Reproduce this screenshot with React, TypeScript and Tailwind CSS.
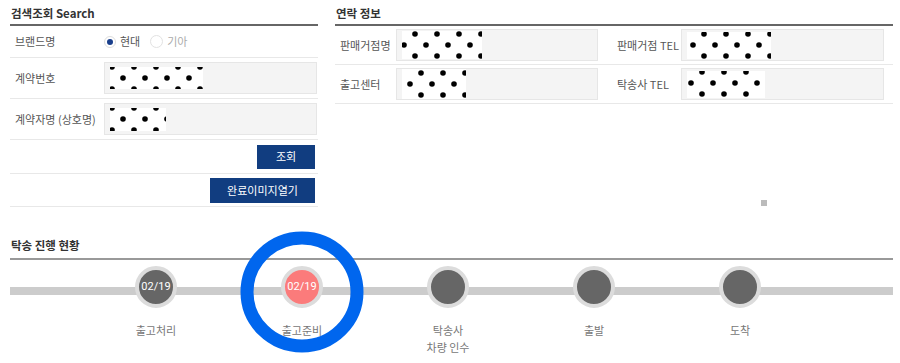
const font = { fontFamily: '"Noto Sans CJK KR", "Noto Sans", sans-serif' };

// masked value: white block with a staggered dot pattern
function Masked({ w, h, id, ox = 0, oy = 0 }: { w: number; h: number; id: string; ox?: number; oy?: number }) {
  return (
    <svg width={w} height={h} className="block bg-white">
      <defs>
        <pattern id={id} x={ox} y={oy} width="22" height="22" patternUnits="userSpaceOnUse">
          <circle cx="0" cy="0" r="2.8" fill="#000" />
          <circle cx="22" cy="0" r="2.8" fill="#000" />
          <circle cx="0" cy="22" r="2.8" fill="#000" />
          <circle cx="22" cy="22" r="2.8" fill="#000" />
          <circle cx="11" cy="11" r="2.8" fill="#000" />
        </pattern>
      </defs>
      <rect width={w} height={h} fill={`url(#${id})`} />
    </svg>
  );
}

function Field({ children }: { children?: React.ReactNode }) {
  return (
    <div className="h-[32px] bg-[#f4f4f4] border border-[#e6e6e6] flex items-center pl-[5px] overflow-hidden">
      {children}
    </div>
  );
}

const steps = [
  { label: ["출고처리"], date: "02/19", active: false },
  { label: ["출고준비"], date: "02/19", active: true },
  { label: ["탁송사", "차량 인수"], date: "", active: false },
  { label: ["출발"], date: "", active: false },
  { label: ["도착"], date: "", active: false },
];

export default function App() {
  return (
    <div className="w-[900px] h-[363px] bg-white relative overflow-hidden text-[#555]" style={font}>
      <div className="flex pl-[10px] pt-[6px]">
        {/* 검색조회 */}
        <div className="w-[308px]">
          <h2 className="text-[11.5px] font-bold text-[#333] leading-[15px] pl-[1px]">검색조회 Search</h2>
          <div className="h-[2px] bg-[#666] mt-[3px]" />
          <div className="h-[32px] flex items-center border-b border-[#e8e8e8]">
            <span className="w-[94px] pl-[5px] text-[11px]">브랜드명</span>
            <label className="flex items-center gap-[4px] text-[11px] text-[#555]">
              <span className="w-[12px] h-[12px] rounded-full border border-[#ddd] bg-white flex items-center justify-center">
                <span className="w-[6px] h-[6px] rounded-full bg-[#1a3f8c]" />
              </span>
              현대
            </label>
            <label className="flex items-center gap-[4px] text-[11px] text-[#aaa] ml-[10px]">
              <span className="w-[13px] h-[13px] rounded-full border border-[#e2e2e2] bg-white" />
              기아
            </label>
          </div>
          <div className="h-[41px] flex items-center border-b border-[#e8e8e8]">
            <span className="w-[94px] pl-[5px] text-[11px]">계약번호</span>
            <div className="flex-1 pr-[1px]">
              <Field>
                <Masked w={93} h={22} id="m1" ox={2} oy={0} />
              </Field>
            </div>
          </div>
          <div className="h-[41px] flex items-center border-b border-[#e8e8e8]">
            <span className="w-[94px] pl-[5px] text-[11px]">계약자명 (상호명)</span>
            <div className="flex-1 pr-[1px]">
              <Field>
                <Masked w={56} h={23} id="m2" ox={2} oy={0} />
              </Field>
            </div>
          </div>
          <div className="h-[34px] flex items-center justify-end border-b border-[#e8e8e8] pr-[3px]">
            <button className="w-[58px] h-[24px] bg-[#113d80] text-white text-[11px]">조회</button>
          </div>
          <div className="h-[33px] flex items-center justify-end border-b border-[#e8e8e8] pr-[3px]">
            <button className="w-[105px] h-[25px] bg-[#113d80] text-white text-[11px]">완료이미지열기</button>
          </div>
        </div>

        {/* 연락 정보 */}
        <div className="w-[558px] ml-[17px]">
          <h2 className="text-[11.5px] font-bold text-[#333] leading-[15px] pl-[1px]">연락 정보</h2>
          <div className="h-[2px] bg-[#666] mt-[3px]" />
          <div className="h-[39px] flex items-center border-b border-[#e8e8e8]">
            <span className="w-[61px] pl-[5px] text-[11px]">판매거점명</span>
            <div className="w-[202px]">
              <Field>
                <Masked w={80} h={28} id="m3" ox={2} oy={-8} />
              </Field>
            </div>
            <span className="w-[83px] pl-[19px] text-[11px]">판매거점 TEL</span>
            <div className="w-[203px]">
              <Field>
                <Masked w={84} h={27} id="m4" ox={6} oy={-9} />
              </Field>
            </div>
          </div>
          <div className="h-[39px] flex items-center border-b border-[#e8e8e8]">
            <span className="w-[61px] pl-[5px] text-[11px]">출고센터</span>
            <div className="w-[202px]">
              <Field>
                <Masked w={64} h={30} id="m5" ox={-3} oy={4} />
              </Field>
            </div>
            <span className="w-[83px] pl-[19px] text-[11px]">탁송사 TEL</span>
            <div className="w-[203px]">
              <Field>
                <Masked w={78} h={27} id="m6" ox={4} oy={-10} />
              </Field>
            </div>
          </div>
          <div className="ml-[426px] mt-[96px] w-[6px] h-[6px] bg-[#bbb]" />
        </div>
      </div>

      {/* 탁송 진행 현황 */}
      <div className="pl-[10px] pr-[7px] mt-[31px]">
        <h2 className="text-[11.5px] font-bold text-[#333] leading-[15px] pl-[1px]">탁송 진행 현황</h2>
        <div className="h-[2px] bg-[#999] mt-[5px]" />
        <div className="relative mt-[6px]">
          <div className="absolute left-0 right-0 top-[21px] h-[8px] bg-[#cccccc]" />
          <div className="relative flex pl-[73px]">
            {steps.map((s, i) => (
              <div key={i} className="w-[146px] flex flex-col items-center">
                <div
                  className={`w-[42px] h-[42px] rounded-full border-[4px] border-[#dcdcdc] flex items-center justify-center text-white text-[11px] ${
                    s.active ? "bg-[#fb7b7b]" : "bg-[#666666]"
                  }`}
                  style={{ fontFamily: '"Roboto", "Noto Sans", sans-serif' }}
                >
                  {s.date}
                </div>
                <div className="mt-[14px] text-[11px] text-[#777] leading-[17px] text-center">
                  {s.label.map((l) => (
                    <div key={l}>{l}</div>
                  ))}
                </div>
              </div>
            ))}
          </div>
        </div>
      </div>

      {/* annotation ring */}
      <svg className="absolute left-[239px] top-[230px]" width="126" height="124">
        <ellipse cx="63" cy="62" rx="55" ry="54" fill="none" stroke="#0066ee" strokeWidth="13" />
      </svg>
    </div>
  );
}
